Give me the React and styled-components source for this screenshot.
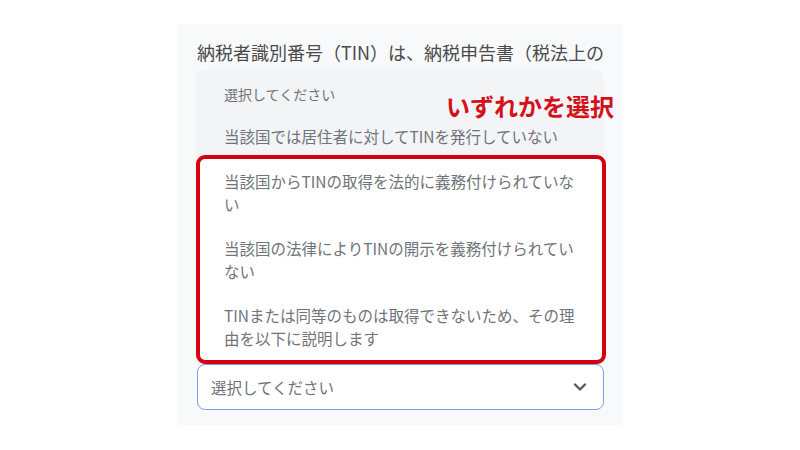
import React from "react";
import styled, { createGlobalStyle } from "styled-components";

const Global = createGlobalStyle`
  html, body { margin: 0; padding: 0; background: #ffffff; }
  body { font-family: "Noto Sans CJK JP", "Noto Sans", sans-serif; }
`;

const Page = styled.div`
  width: 800px;
  height: 450px;
  display: flex;
  justify-content: center;
  align-items: flex-start;
  padding-top: 24px;
  box-sizing: border-box;
`;

const Panel = styled.div`
  width: 444px;
  height: 401px;
  box-sizing: border-box;
  background: #f8f9fb;
  padding: 15px 18px 15px 19px;
  display: flex;
  flex-direction: column;
`;

const Heading = styled.div`
  font-size: 18px;
  line-height: 26px;
  color: #4a4a4a;
  white-space: nowrap;
`;

const Menu = styled.div`
  position: relative;
  margin-top: 5px;
  width: 405px;
  background: #f3f4f6;
  border-radius: 8px 8px 0 0;
  box-shadow: 0 0 3px rgba(0, 0, 0, 0.06);
  padding-top: 4px;
  display: flex;
  flex-direction: column;
`;

const Option = styled.div`
  padding: ${(p) => (p.$small ? "10px 27px 10px 27px" : "9.5px 24px 9.5px 27px")};
  font-size: ${(p) => (p.$small ? "14px" : "15.5px")};
  line-height: ${(p) => (p.$small ? "21px" : "23px")};
  color: #6f737a;
`;

const Highlight = styled.div`
  margin: -2px -4px 0 -1px;
  border: 4px solid #d7000f;
  border-radius: 9px;
  background: #ffffff;
  display: flex;
  flex-direction: column;
  & > ${Option} {
    padding: 10.5px 20px 10.5px 24px;
  }
`;

const Callout = styled.div`
  position: absolute;
  top: 20px;
  left: 249px;
  font-size: 24px;
  line-height: 32px;
  font-weight: 700;
  color: #d3111b;
  white-space: nowrap;
`;

const Select = styled.div`
  width: 407px;
  height: 48px;
  box-sizing: border-box;
  border: 1px solid #76a3ea;
  border-radius: 8px;
  background: #ffffff;
  display: flex;
  align-items: center;
  justify-content: space-between;
  padding: 0 16px 0 13px;
  font-size: 15.5px;
  color: #6f737a;
`;

const Chevron = () => (
  <svg width="14" height="10" viewBox="0 0 14 10">
    <path d="M2 2.5 L7 7.5 L12 2.5" fill="none" stroke="#555a60" strokeWidth="2.4" strokeLinecap="round" strokeLinejoin="round" />
  </svg>
);

export default function App() {
  return (
    <>
      <Global />
      <Page>
        <Panel>
          <Heading>納税者識別番号（TIN）は、納税申告書（税法上の</Heading>
          <Menu>
            <Option $small>選択してください</Option>
            <Option>当該国では居住者に対してTINを発行していない</Option>
            <Highlight>
              <Option>当該国からTINの取得を法的に義務付けられていない</Option>
              <Option>当該国の法律によりTINの開示を義務付けられていない</Option>
              <Option>TINまたは同等のものは取得できないため、その理由を以下に説明します</Option>
            </Highlight>
            <Callout>いずれかを選択</Callout>
          </Menu>
          <Select>
            <span>選択してください</span>
            <Chevron />
          </Select>
        </Panel>
      </Page>
    </>
  );
}
